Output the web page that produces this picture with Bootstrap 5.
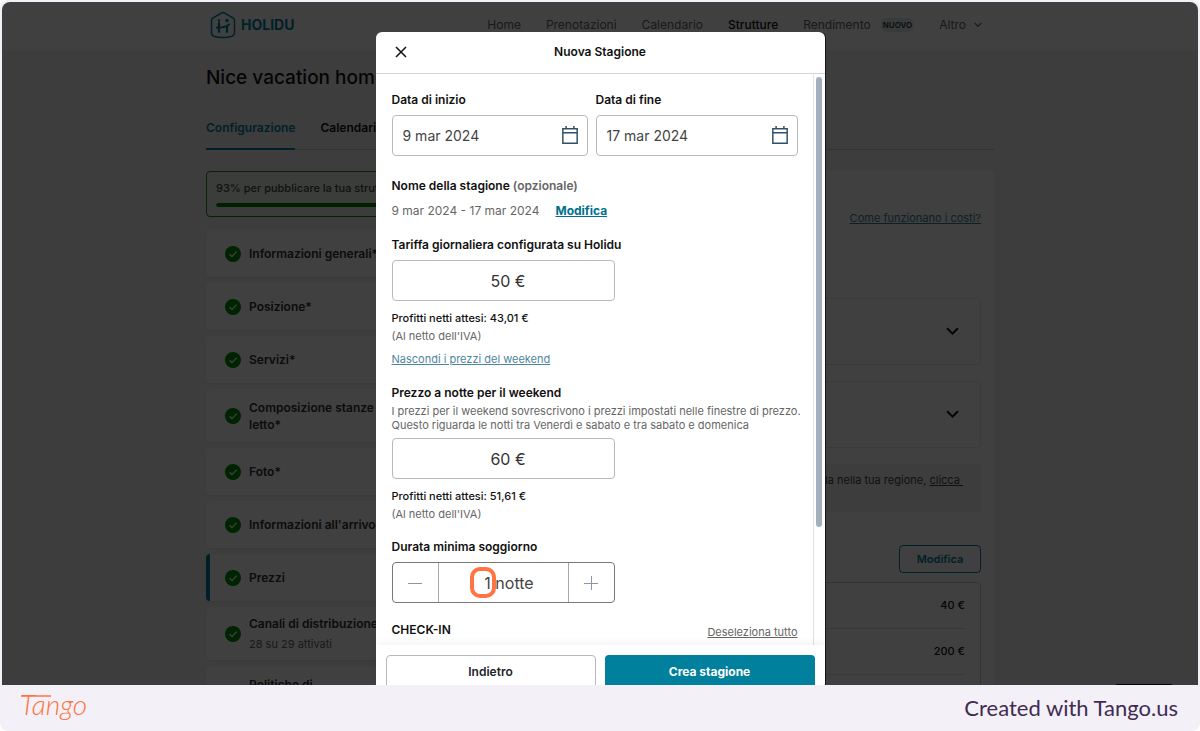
<!DOCTYPE html>
<html lang="it">
<head>
<meta charset="utf-8">
<meta name="viewport" content="width=device-width, initial-scale=1">
<title>Nuova Stagione</title>
<link href="https://cdn.jsdelivr.net/npm/bootstrap@5.3.0/dist/css/bootstrap.min.css" rel="stylesheet">
<style>
  :root { --teal: #00809d; --line: #b9b9b9; }
  html { background: #fff; }
  body { background: #f3f1f7; border-radius: 8px; font-family: Inter, "Liberation Sans", sans-serif; font-size: 12px; line-height: 22px; color: #111; }
  button, input { font-family: inherit; }
  .shot { background: #f4f4f4; border-radius: 8px 8px 0 0; margin: 2px 2px 0; min-height: 0; }
  .page-inner { width: 100%; max-width: 788px; }
  .topbar { height: 48px; padding-bottom: 3px; }
  .topbar .brand { gap: 5px; }
  .logo-word { font-size: 14px; font-weight: 700; color: var(--teal); }
  .topnav { gap: 25px; padding-right: 12px; }
  .topnav a { color: #666; }
  .topnav a.active { color: #111; font-weight: 500; }
  .tag-new { background: #dfecf0; color: #333; font-size: 8px; line-height: 14px; font-weight: 600; padding: 0 2px; margin-left: 10px; }
  .page-title { font-size: 19px; font-weight: 500; line-height: 28px; margin: 14px 0 25px; }
  .tabs { gap: 25px; border-bottom: 1px solid #ccc; font-weight: 600; margin-bottom: 21px; }
  .tabs a { color: #111; padding: 0 0 9px; margin-bottom: -1px; }
  .tabs a.active { color: var(--teal); border-bottom: 2px solid var(--teal); }
  .side { width: 280px; gap: 6px; }
  .publish { background: #e8f3e8; border: 1px solid #1a8a1a; border-radius: 4px; height: 46px; margin-bottom: 7px; padding: 5px 9px; font-size: 11px; font-weight: 500; color: #444; }
  .publish .progress { height: 4px; margin-top: 4px; background: #ccc; }
  .publish .progress-bar { background: #008000; border-radius: 4px; }
  .step { background: #fff; border-radius: 4px; min-height: 47px; padding: 0 19px; gap: 8px; color: #333; font-weight: 600; line-height: 17px; box-shadow: 0 1px 3px rgba(0,0,0,.08); }
  .step.tall { min-height: 53px; }
  .step.current { border-left: 4px solid var(--teal); padding-left: 15px; }
  .step .sub { font-size: 11px; font-weight: 400; color: #666; margin-top: 4px; }
  .panel { background: #fff; border-radius: 4px; padding: 36px 13px 0; }
  .panel .cost { font-size: 11px; color: #3b7f94; }
  .folds { padding-top: 21px; }
  .fold { height: 67px; border: 1px solid #e8e8e8; border-radius: 4px; padding-right: 21px; }
  .note { background: #f4f4f4; border-radius: 4px; height: 48px; padding: 5px 18px 0; font-size: 11px; color: #444; }
  .edit-row { margin: 33px 0 9px; }
  .btn-edit { width: 82px; height: 28px; border: 1px solid var(--teal); border-radius: 4px; color: var(--teal); font-size: 11px; font-weight: 600; padding: 0; }
  .price-box { border: 1px solid #ccc; border-radius: 4px; padding: 0 15px; }
  .price-box table { font-size: 11px; font-weight: 500; line-height: 45px; }
  .price-box tr { border-bottom: 1px solid #e4e4e4; }
  .price-box td { padding: 0; text-align: right; }
  .shade { background: rgba(0,0,0,.75); }
  .chat { background: #000; width: 60px; height: 30px; border-radius: 4px; right: 24px; bottom: -29px; }
  .dialog { width: 449px; margin-top: 30px; background: #fff; border-radius: 6px 6px 0 0; box-shadow: 1px 0 0 #151515; }
  .dialog-head { height: 42px; border-bottom: 1px solid #d6d6d6; padding-bottom: 1px; }
  .dialog-head h1 { font-size: 12px; line-height: 22px; font-weight: 600; }
  .dialog-head button { left: 16px; width: 18px; height: 18px; }
  .dialog-main { min-height: 0; }
  .form-area { padding: 15px 15px 0 16px; min-width: 0; }
  .form-area label, .form-area .lbl { font-weight: 600; display: block; margin-bottom: 4px; }
  .dates { display: grid; grid-template-columns: 33fr 34fr; gap: 8px; margin-bottom: 19px; }
  .dates > div { min-width: 0; }
  .field { height: 41px; border: 1px solid var(--line); border-radius: 4px; }
  .field input { font-size: 14px; color: #444; outline: 0; min-width: 0; padding: 0 2px; }
  .amount { width: 223px; font-size: 16px; color: #333; text-align: center; padding: 0 0 0 10px; display: block; outline: 0; }
  .muted { color: #666; }
  .form-area .season { margin-bottom: 3px; }
  .hint { font-size: 11px; line-height: 18px; color: #666; }
  .hint strong { font-weight: 500; color: #111; }
  .weekend-toggle { margin: 5px 0 14px; }
  .weekend-toggle a { color: #4d86a0; }
  .about { font-size: 11px; line-height: 14px; color: #666; margin-bottom: 6px; }
  .nights { margin-top: 13px; }
  .stepper { width: 223px; height: 41px; border: 1px solid #777; border-radius: 4px; }
  .stepper button { flex: 0 0 45px; }
  .stepper input { font-size: 16px; color: #444; text-align: center; padding: 0 0 0 12px; width: 0; border: solid #aaa; border-width: 0 1px; outline: 0; }
  .ring { left: 77px; top: 4px; width: 26px; height: 31px; border: 4px solid #ff7442; border-radius: 10px; pointer-events: none; }
  .track { width: 12px; border-left: 1px solid #e2e2e2; padding: 3px 3px 0 2px; }
  .thumb { height: 450px; border-radius: 3px; background: #a3afbc; }
  .dialog-foot { height: 40px; padding: 10px 10px 0; gap: 9px; box-shadow: 0 -2px 8px rgba(0,0,0,.06); background: #fff; z-index: 1; }
  .dialog-foot .btn { height: 34px; border-radius: 4px 4px 0 0; font-size: 12px; line-height: 20px; padding: 0; flex: 1; }
  .btn-back { border: 1px solid var(--line); font-weight: 600; }
  .btn-make, .btn-make:hover { background: var(--teal); color: #fff; font-weight: 700; }
  .link-teal { color: #00708f; }
  .brandbar { height: 46px; padding: 0 22px 0 20px; color: #412b53; font-family: Lato, sans-serif; font-size: 22px; }
</style>
</head>
<body class="vh-100 d-flex flex-column overflow-hidden">
<svg class="d-none" aria-hidden="true">
  <symbol id="tick" viewBox="0 0 16 16"><circle cx="8" cy="8" r="8" fill="#008a05"/><path d="M4.5 8.3 7 10.6l4.6-5" fill="none" stroke="#fff" stroke-width="1.3"/></symbol>
  <symbol id="chev" viewBox="0 0 12 8"><path d="M1 1l5 5 5-5" fill="none" stroke="currentColor" stroke-width="1.8"/></symbol>
  <symbol id="cal" viewBox="0 0 16 18"><path d="M1.2 2.7h13.6v13.6H1.2zM1 6.5h14M4.3 0v3M11.7 0v3" fill="none" stroke="#2f5068" stroke-width="1.4"/></symbol>
</svg>

<div class="shot flex-grow-1 position-relative overflow-hidden">
  <header class="topbar bg-white">
    <div class="page-inner mx-auto h-100 d-flex align-items-center justify-content-between">
      <a href="#" class="brand d-flex align-items-center ps-1 text-decoration-none">
        <svg width="26" height="28" viewBox="0 0 26 28" fill="none" stroke="#00809d" stroke-width="1.5" stroke-linecap="round"><path d="M13 1.500c.7 0 1.200.2 1.800.6l8.400 5c.9.6 1.300 1.300 1.300 2.300V22c0 1.700-.8 2.600-2.400 3.200-5.600 1.700-12.600 1.700-18.200 0C2.300 24.600 1.500 23.700 1.500 22V9.400c0-1 .4-1.700 1.300-2.300l8.400-5c.6-.4 1.100-.6 1.800-.6z"/><path d="M9 12v9M17 15v6M7 16.500c5 .3 9-.5 12-3" stroke-width="2.200"/><circle cx="9" cy="9.500" r=".6"/><circle cx="17" cy="9.500" r=".9"/></svg>
        <span class="logo-word">HOLIDU</span>
      </a>
      <nav class="topnav d-flex">
        <a href="#" class="text-decoration-none">Home</a>
        <a href="#" class="text-decoration-none">Prenotazioni</a>
        <a href="#" class="text-decoration-none">Calendario</a>
        <a href="#" class="text-decoration-none active">Strutture</a>
        <a href="#" class="text-decoration-none d-flex align-items-center">Rendimento <span class="tag-new rounded">NUOVO</span></a>
        <a href="#" class="text-decoration-none d-flex align-items-center">Altro <svg class="ms-2" width="8" height="6"><use href="#chev"/></svg></a>
      </nav>
    </div>
  </header>

  <main class="page-inner mx-auto">
    <h2 class="page-title">Nice vacation home</h2>
    <nav class="tabs d-flex">
      <a href="#" class="text-decoration-none active">Configurazione</a>
      <a href="#" class="text-decoration-none">Calendario</a>
    </nav>
    <div class="d-flex align-items-start gap-3">
      <div class="side d-flex flex-column flex-shrink-0">
        <div class="publish">93% per pubblicare la tua struttura
          <div class="progress"><div class="progress-bar" style="width:93%"></div></div>
        </div>
        <div class="step d-flex align-items-center"><svg width="16" height="16"><use href="#tick"/></svg>Informazioni generali*</div>
        <div class="step d-flex align-items-center"><svg width="16" height="16"><use href="#tick"/></svg>Posizione*</div>
        <div class="step d-flex align-items-center"><svg width="16" height="16"><use href="#tick"/></svg>Servizi*</div>
        <div class="step tall d-flex align-items-center"><svg width="16" height="16"><use href="#tick"/></svg><span>Composizione stanze e<br>letto*</span></div>
        <div class="step d-flex align-items-center"><svg width="16" height="16"><use href="#tick"/></svg>Foto*</div>
        <div class="step d-flex align-items-center"><svg width="16" height="16"><use href="#tick"/></svg>Informazioni all'arrivo</div>
        <div class="step current d-flex align-items-center"><svg width="16" height="16"><use href="#tick"/></svg>Prezzi</div>
        <div class="step tall d-flex align-items-center"><svg width="16" height="16"><use href="#tick"/></svg><div>Canali di distribuzione<div class="sub">28 su 29 attivati</div></div></div>
        <div class="step tall d-flex align-items-center"><svg width="16" height="16"><use href="#tick"/></svg><span>Politiche di<br>&nbsp;</span></div>
      </div>
      <section class="panel flex-grow-1">
        <div class="text-end mb-5"><a href="#" class="cost">Come funzionano i costi?</a></div>
        <div class="folds d-flex flex-column gap-3">
          <div class="fold d-flex align-items-center justify-content-end"><svg width="13" height="9"><use href="#chev"/></svg></div>
          <div class="fold d-flex align-items-center justify-content-end"><svg width="13" height="9"><use href="#chev"/></svg></div>
          <div class="note text-end">da nella tua regione, <a href="#" class="text-reset">clicca&nbsp;</a></div>
        </div>
        <div class="edit-row text-end"><button type="button" class="btn btn-edit">Modifica</button></div>
        <div class="price-box">
          <table class="w-100">
            <tr><td>40 €</td></tr>
            <tr><td>200 €</td></tr>
            <tr><td>&nbsp;</td></tr>
          </table>
        </div>
      </section>
    </div>
  </main>

  <div class="shade position-absolute top-0 start-0 w-100 h-100 d-flex justify-content-center">
    <div class="dialog d-flex flex-column" role="dialog" aria-labelledby="dlg">
      <div class="dialog-head position-relative d-flex align-items-center justify-content-center flex-shrink-0">
        <button type="button" class="border-0 bg-transparent p-0 position-absolute d-flex align-items-center justify-content-center" aria-label="Chiudi"><svg width="12" height="12" viewBox="0 0 12 12"><path d="M1 1l10 10M11 1L1 11" stroke="#111" stroke-width="1.500"/></svg></button>
        <h1 id="dlg" class="m-0">Nuova Stagione</h1>
      </div>
      <div class="dialog-main flex-grow-1 d-flex overflow-hidden">
        <form class="form-area flex-grow-1">
          <div class="dates">
            <div><label for="d1">Data di inizio</label>
              <div class="field d-flex align-items-center px-2"><input id="d1" class="border-0 bg-transparent flex-grow-1" value="9 mar 2024"><svg class="flex-shrink-0" width="18" height="19"><use href="#cal"/></svg></div></div>
            <div><label for="d2">Data di fine</label>
              <div class="field d-flex align-items-center px-2"><input id="d2" class="border-0 bg-transparent flex-grow-1" value="17 mar 2024"><svg class="flex-shrink-0" width="18" height="19"><use href="#cal"/></svg></div></div>
          </div>
          <div class="lbl season">Nome della stagione <span class="muted">(opzionale)</span></div>
          <div class="muted d-flex gap-3"><span>9 mar 2024 - 17 mar 2024</span><a href="#" class="link-teal fw-bold">Modifica</a></div>
          <label for="p1" class="mt-2 pt-1">Tariffa giornaliera configurata su Holidu</label>
          <input id="p1" class="field amount" value="50 €">
          <div class="hint mt-2"><strong>Profitti netti attesi: 43,01 €</strong><br>(Al netto dell'IVA)</div>
          <div class="hint weekend-toggle"><a href="#">Nascondi i prezzi del weekend</a></div>
          <label for="p2" class="mb-0">Prezzo a notte per il weekend</label>
          <div class="about text-nowrap">I prezzi per il weekend sovrescrivono i prezzi impostati nelle finestre di prezzo.<br>Questo riguarda le notti tra Venerdì e sabato e tra sabato e domenica</div>
          <input id="p2" class="field amount" value="60 €">
          <div class="hint mt-2"><strong>Profitti netti attesi: 51,61 €</strong><br>(Al netto dell'IVA)</div>
          <label for="n1" class="nights">Durata minima soggiorno</label>
          <div class="stepper d-flex position-relative">
            <button type="button" class="border-0 bg-transparent p-0" aria-label="Meno"><svg width="14" height="14"><path d="M0 7.500h14" stroke="#8a98a5"/></svg></button>
            <input id="n1" class="flex-grow-1 bg-transparent" value="1 notte">
            <button type="button" class="border-0 bg-transparent p-0" aria-label="Più"><svg width="14" height="14"><path d="M0 7.500h14M7.500 0v14" stroke="#8a98a5"/></svg></button>
            <div class="ring position-absolute"></div>
          </div>
          <div class="d-flex justify-content-between mt-3"><span class="lbl">CHECK-IN</span><a href="#" class="hint pt-1">Deseleziona tutto</a></div>
        </form>
        <div class="track flex-shrink-0"><div class="thumb"></div></div>
      </div>
      <div class="dialog-foot d-flex flex-shrink-0">
        <button type="button" class="btn btn-back">Indietro</button>
        <button type="button" class="btn btn-make">Crea stagione</button>
      </div>
    </div>
  </div>
  <div class="chat position-absolute"></div>
</div>

<footer class="brandbar d-flex align-items-center justify-content-between flex-shrink-0">
  <svg width="70" height="40" role="img" aria-label="Tango"><text x="0" y="27" font-family="Lato, sans-serif" font-style="italic" font-weight="300" font-size="28" fill="#ff7442">Tango</text><path d="M1 8h30" stroke="#ff7442" stroke-width="1.500"/></svg>
  <span>Created with Tango.us</span>
</footer>
<script src="https://cdn.jsdelivr.net/npm/bootstrap@5.3.0/dist/js/bootstrap.bundle.min.js"></script>
</body>
</html>
